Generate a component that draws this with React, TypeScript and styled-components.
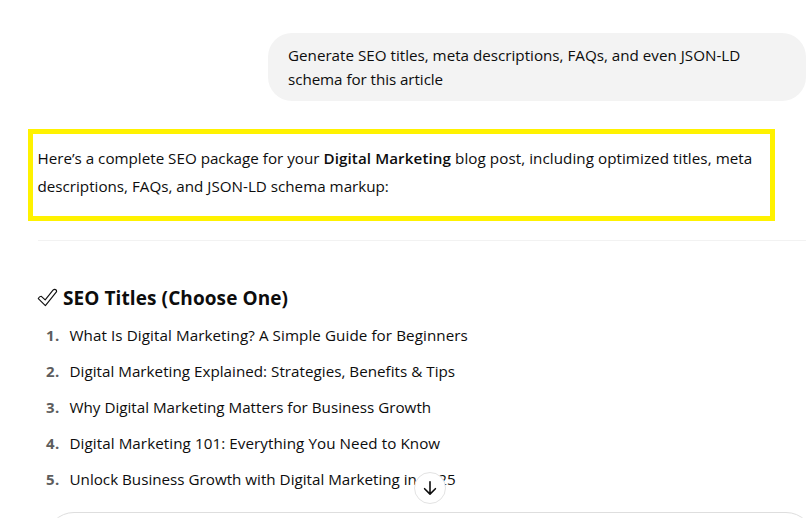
import React from "react";
import styled, { createGlobalStyle } from "styled-components";

const GlobalStyle = createGlobalStyle`
  * { box-sizing: border-box; }
  body {
    margin: 0;
    background: #fff;
    color: #0d0d0d;
    font-family: "Open Sans", "Noto Sans", sans-serif;
    font-size: 15.2px;
    overflow: hidden;
  }
`;

const Page = styled.main`
  position: relative;
  height: 518px;
  padding-top: 33px;
  overflow: hidden;
`;

const UserBubble = styled.div`
  width: 538px;
  height: 68px;
  margin-left: 268px;
  padding: 10px 20px;
  border-radius: 24px;
  background: #f3f3f3;
  line-height: 24px;
`;

const Line = styled.div`
  white-space: pre;
`;

const Run = styled.span<{ $track?: number }>`
  letter-spacing: ${(p) => p.$track ?? 0}px;
`;

const StrongRun = styled(Run)`
  font-weight: 600;
`;

const Highlight = styled.section`
  width: 747px;
  height: 92px;
  margin: 28px 0 0 28px;
  padding: 10px 4.5px;
  border: 5px solid #fff200;
  line-height: 28px;
`;

const Divider = styled.hr`
  height: 1px;
  margin: 19px 2px 0 38px;
  border: 0;
  background: #f2f2f2;
`;

const Heading = styled.h2`
  display: flex;
  align-items: center;
  gap: 5px;
  height: 28px;
  margin: 43px 0 0 37px;
  font-size: 19px;
  font-weight: 700;
  line-height: 28px;
  white-space: nowrap;
`;

const TitleList = styled.ol`
  display: grid;
  grid-auto-rows: 28px;
  row-gap: 8px;
  margin: 9px 0 0 46px;
  padding: 0;
  list-style: none;
  line-height: 28px;
`;

const TitleItem = styled.li`
  display: grid;
  grid-template-columns: 23.5px 1fr;
  white-space: nowrap;
`;

const Index = styled.span`
  color: #5d5d5d;
  font-size: 15px;
  font-weight: 700;
  letter-spacing: 0.5px;
`;

const ScrollButton = styled.button`
  position: absolute;
  left: 414px;
  top: 472px;
  display: grid;
  place-items: center;
  width: 32px;
  height: 32px;
  padding: 0;
  border: 1px solid #e3e3e3;
  border-radius: 50%;
  background: #fff;
  color: #0d0d0d;
`;

const Composer = styled.div`
  position: absolute;
  left: 46px;
  top: 512px;
  width: 768px;
  height: 56px;
  border: 1px solid #dedede;
  border-radius: 28px;
  background: #fff;
`;

const titles = [
  { text: "What Is Digital Marketing? A Simple Guide for Beginners", track: 0.08 },
  { text: "Digital Marketing Explained: Strategies, Benefits & Tips", track: 0.02 },
  { text: "Why Digital Marketing Matters for Business Growth", track: 0 },
  { text: "Digital Marketing 101: Everything You Need to Know", track: 0.07 },
  { text: "Unlock Business Growth with Digital Marketing in 2025", track: 0 },
];

const CheckIcon = () => (
  <svg width="21" height="20" viewBox="0 0 21 20" fill="none" stroke="#111" strokeWidth="1.15" strokeLinejoin="round">
    <path d="M1.3 10.6Q2.4 8.2 4.3 8.3L8.2 11.9 16 2.2Q17.6 0.6 19.4 2.2L19.6 3.6 8.4 17.6Z" />
  </svg>
);

const ArrowDown = () => (
  <svg width="16" height="16" viewBox="0 0 16 16" fill="none" stroke="currentColor" strokeWidth="1.6" strokeLinecap="round" strokeLinejoin="round">
    <path d="M8 1.7V14M2.6 8.7 8 14.1l5.4-5.4" />
  </svg>
);

export default function App() {
  return (
    <Page>
      <GlobalStyle />
      <UserBubble>
        <Line><Run>Generate SEO titles, meta descriptions, FAQs, and even JSON-LD</Run></Line>
        <Line><Run $track={-0.06}>schema for this article</Run></Line>
      </UserBubble>
      <Highlight>
        <Line>
          <Run>Here’s a complete SEO package for your </Run>
          <StrongRun $track={0.09}>Digital Marketing</StrongRun>
          <Run $track={0.06}> blog post, including optimized titles, meta</Run>
        </Line>
        <Line><Run>descriptions, FAQs, and JSON-LD schema markup:</Run></Line>
      </Highlight>
      <Divider />
      <Heading>
        <CheckIcon />
        <Run $track={0.09}>SEO Titles (Choose One)</Run>
      </Heading>
      <TitleList>
        {titles.map((t, i) => (
          <TitleItem key={t.text}>
            <Index>{i + 1}.</Index>
            <Run $track={t.track}>{t.text}</Run>
          </TitleItem>
        ))}
      </TitleList>
      <Composer />
      <ScrollButton aria-label="Scroll to bottom">
        <ArrowDown />
      </ScrollButton>
    </Page>
  );
}
